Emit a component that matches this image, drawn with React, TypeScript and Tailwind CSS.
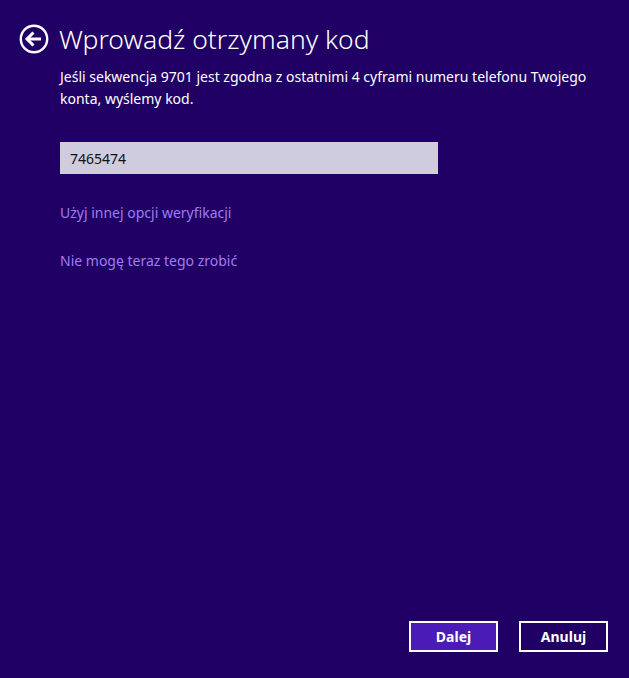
import React from "react";

const BackIcon = () => (
  <svg width="30" height="30" viewBox="0 0 30 30" fill="none" aria-hidden>
    <circle cx="15" cy="15" r="13.2" stroke="white" strokeWidth="2.4" />
    <path d="M8 15h14" stroke="white" strokeWidth="3" />
    <path d="M14.5 8.5L8 15l6.5 6.5" stroke="white" strokeWidth="3" />
  </svg>
);

const App = () => {
  return (
    <div
      className="flex h-[678px] w-[629px] flex-col bg-[#200064] text-white"
      style={{ fontFamily: '"Noto Sans", "Open Sans", sans-serif' }}
    >
      <div className="flex items-center gap-[10px] pl-[19px] pt-[23px]">
        <BackIcon />
        <h1 className="text-[26.5px] font-light leading-[32px]">
          Wprowadź otrzymany kod
        </h1>
      </div>

      <div className="pl-[60px] pr-[20px]">
        <p className="mt-[11px] text-[14px] leading-[22px]">
          Jeśli sekwencja 9701 jest zgodna z ostatnimi 4 cyframi numeru telefonu Twojego
          konta, wyślemy kod.
        </p>

        <div className="mt-[32px] flex h-[32px] w-[378px] items-center bg-[#d0cce0] px-[10px] text-[14px] text-[#111]">
          7465474
        </div>

        <a className="mt-[28px] block text-[14px] leading-[22px] text-[#a07cf4]">
          Użyj innej opcji weryfikacji
        </a>
        <a className="mt-[26px] block text-[14px] leading-[22px] text-[#a07cf4]">
          Nie mogę teraz tego zrobić
        </a>
      </div>

      <div className="mt-auto flex justify-end gap-[21px] pb-[26px] pr-[21px]">
        <button className="h-[31px] w-[89px] border-2 border-white bg-[#4a1bb6] text-[14px] font-bold">
          Dalej
        </button>
        <button className="h-[31px] w-[89px] border-2 border-white bg-[#200064] text-[14px] font-bold">
          Anuluj
        </button>
      </div>
    </div>
  );
};

export default App;
